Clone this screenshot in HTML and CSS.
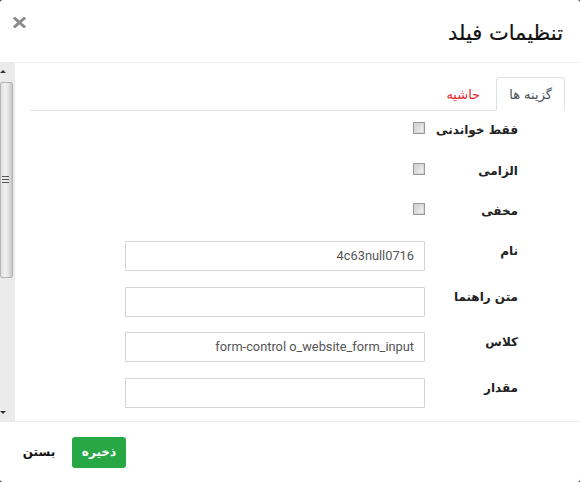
FILE: index.html
```html
<!DOCTYPE html>
<html lang="fa" dir="rtl">
<head>
<meta charset="utf-8">
<link rel="stylesheet" href="styles.css">
</head>
<body>
<div class="modal">
  <header class="modal-header">
    <h4 class="modal-title">تنظیمات فیلد</h4>
    <button class="close" aria-label="close">
      <svg width="13" height="11" viewBox="0 0 13 11"><path d="M2 1.5 L11 9.5 M11 1.5 L2 9.5" stroke="#8c8c8c" stroke-width="3" stroke-linecap="square"/></svg>
    </button>
  </header>
  <div class="modal-body">
    <div class="pane">
      <ul class="tabs">
        <li class="tab active">گزینه ها</li>
        <li class="tab link">حاشیه</li>
      </ul>
      <div class="form">
        <div class="row check-row"><label class="lbl">فقط خواندنی</label><div class="ctrl"><span class="cb"></span></div></div>
        <div class="row check-row"><label class="lbl">الزامی</label><div class="ctrl"><span class="cb"></span></div></div>
        <div class="row check-row"><label class="lbl">مخفی</label><div class="ctrl"><span class="cb"></span></div></div>
        <div class="row input-row"><label class="lbl">نام</label><div class="ctrl"><div class="input">4c63null0716</div></div></div>
        <div class="row input-row"><label class="lbl">متن راهنما</label><div class="ctrl"><div class="input"></div></div></div>
        <div class="row input-row"><label class="lbl">کلاس</label><div class="ctrl"><div class="input">form-control o_website_form_input</div></div></div>
        <div class="row input-row"><label class="lbl">مقدار</label><div class="ctrl"><div class="input"></div></div></div>
      </div>
    </div>
    <div class="scrollbar">
      <span class="arrow up"></span>
      <div class="thumb"><span class="grip"></span></div>
      <span class="arrow down"></span>
    </div>
  </div>
  <footer class="modal-footer">
    <button class="btn btn-save">ذخیره</button>
    <button class="btn btn-close">بستن</button>
  </footer>
</div>
</body>
</html>
```
FILE: styles.css
```css
* { box-sizing: border-box; }
html, body { margin: 0; padding: 0; }
body { background: #444; font-family: "DejaVu Sans", sans-serif; }
.modal {
  width: 580px; height: 482px; background: #fff; border-radius: 3px;
  display: flex; flex-direction: column; overflow: hidden;
}
.modal-header {
  height: 63px; flex: none; border-bottom: 1px solid #e9ecef;
  display: flex; align-items: flex-start; justify-content: space-between;
  padding: 0 17px 0 13px;
}
.modal-title {
  margin: 19px 0 0; font-size: 21px; font-weight: normal; line-height: 28px; color: #111;
  -webkit-text-stroke: 0.2px #111;
}
.close {
  border: 0; background: none; padding: 0; margin-top: 17px; width: 13px; height: 11px; cursor: pointer;
}
.close svg { display: block; }
.modal-body { flex: 1; display: flex; min-height: 0; }
.pane { flex: 1; padding: 14px 15px 0 15px; }
.tabs {
  list-style: none; margin: 0; padding: 0; display: flex;
  border-bottom: 1px solid #dee2e6; height: 34px;
}
.tab {
  height: 34px; padding: 0 12px; line-height: 33px; font-size: 13px; color: #495057;
  border: 1px solid transparent; border-radius: 4px 4px 0 0; margin-bottom: -1px;
}
.tab.active { border-color: #dee2e6 #dee2e6 #fff; background: #fff; }
.tab.link { color: #e4262b; padding: 0 15px; }
.form { padding-top: 8px; }
.row { display: flex; }
.check-row { height: 40.7px; }
.input-row { height: 30px; margin-bottom: 15.7px; }
.lbl {
  width: 93px; margin-right: 47px; flex: none; font-size: 12px; font-weight: bold;
  color: #222; line-height: 20px; padding-top: 1px;
}
.input-row .lbl { padding-top: 0; }
.ctrl { width: 300px; flex: none; }
.cb {
  display: block; width: 12px; height: 12px; margin-top: 3px;
  border: 1px solid #999; box-shadow: inset 0 0 0 1px #d6d6d6;
  background: linear-gradient(135deg, #cacaca, #f6f6f6);
}
.input {
  height: 30px; border: 1px solid #ced4da; border-radius: 1px; padding: 0 10px;
  font-family: Roboto, sans-serif; font-size: 12.8px; line-height: 28px; color: #555;
  direction: ltr; text-align: right; white-space: nowrap;
}
.scrollbar {
  width: 15px; flex: none; background: #ebebeb; position: relative;
  display: flex; flex-direction: column; align-items: flex-end;
}
.arrow { display: block; width: 0; height: 0; border-left: 3px solid transparent; border-right: 3px solid transparent; margin: 0 4px 0 0; }
.arrow.up { border-bottom: 3px solid #333; margin-top: 7px; }
.arrow.down { border-top: 3px solid #333; margin-top: auto; margin-bottom: 7px; }
.thumb {
  width: 13px; height: 196px; margin-top: 9px; border: 1px solid #b5b5b5; border-radius: 2px;
  background: linear-gradient(90deg, #e2e2e2 0, #efefef 40%, #e4e4e4 65%, #c6c6c6 100%);
  display: flex; align-items: center; justify-content: center;
}
.grip {
  display: block; width: 7px; height: 9px; margin-right: 2px;
  background: repeating-linear-gradient(180deg, #555 0 1px, transparent 1px 3px);
}
.modal-footer {
  height: 61px; flex: none; border-top: 1px solid #e9ecef;
  display: flex; align-items: center; justify-content: flex-end; padding: 0 13px;
}
.btn {
  border: 0; font-family: "DejaVu Sans", sans-serif; font-size: 12px; font-weight: bold;
  height: 31px; border-radius: 3px; cursor: pointer; padding: 0;
}
.btn-save { background: #28a745; color: #fff; width: 54px; margin-left: 7px; }
.btn-close { background: none; color: #111; width: 52px; }
```
